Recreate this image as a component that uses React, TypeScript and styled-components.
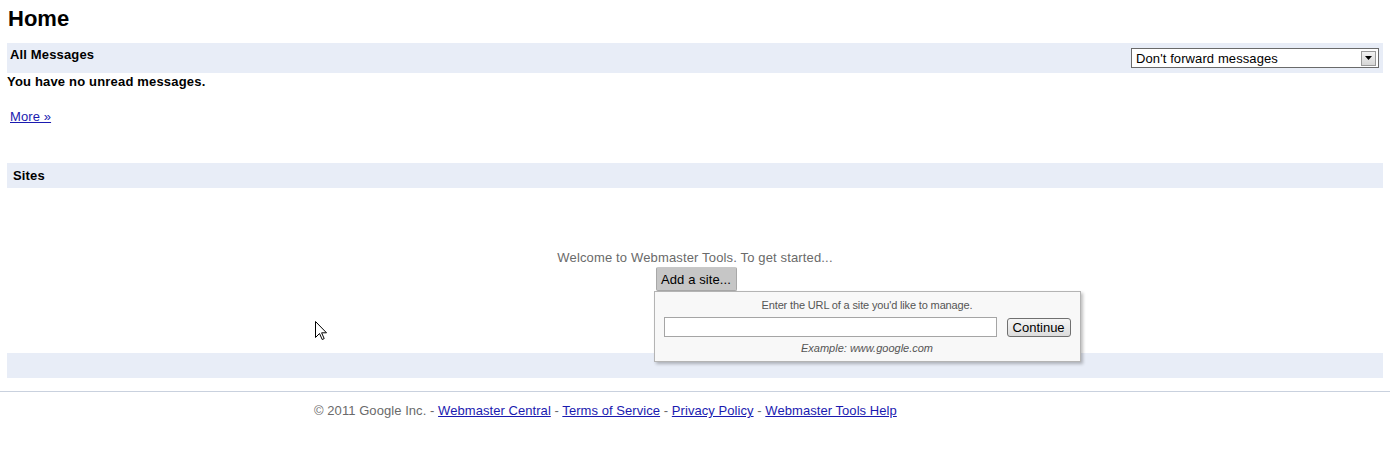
import React from "react";
import styled, { createGlobalStyle } from "styled-components";

const Global = createGlobalStyle`
  html, body { margin: 0; padding: 0; background: #fff; }
  body { font-family: "Liberation Sans", Arial, sans-serif; font-size: 13px; color: #000; letter-spacing: 0.1px; }
`;

const Page = styled.div`
  padding: 0 7px;
`;

const Title = styled.h1`
  margin: 6px 0 12px 1px;
  font-size: 22px;
  line-height: 25px;
  font-weight: bold;
  letter-spacing: 0;
`;

const Bar = styled.div<{ $h: number; $pad: string }>`
  display: flex;
  justify-content: space-between;
  align-items: flex-start;
  height: ${(p) => p.$h}px;
  box-sizing: border-box;
  padding: ${(p) => p.$pad};
  background: #e8edf7;
`;

const BarTitle = styled.div`
  font-weight: bold;
  font-size: 13px;
  line-height: 15px;
  letter-spacing: 0.15px;
`;

const Select = styled.div`
  margin-top: 1px;
  width: 248px;
  height: 20px;
  box-sizing: border-box;
  border: 1px solid #6a6a6a;
  background: #fff;
  display: flex;
  align-items: center;
  justify-content: space-between;
  padding-left: 4px;
  font-size: 13px;
`;

const Arrow = styled.div`
  width: 15px;
  height: 15px;
  margin-right: 2px;
  box-sizing: border-box;
  border: 1px solid #9a9a9a;
  background: linear-gradient(#f2f2f2, #d6d6d6);
  display: flex;
  align-items: center;
  justify-content: center;
`;

const Message = styled.div`
  margin-top: 1px;
  font-weight: bold;
  line-height: 15px;
  letter-spacing: 0.18px;
`;

const Link = styled.a`
  color: #1a1ab0;
  text-decoration: underline;
  cursor: pointer;
`;

const MoreLine = styled.div`
  margin: 20px 0 39px 3px;
  line-height: 15px;
`;

const SitesBody = styled.div`
  padding: 62px 0;
  display: flex;
  flex-direction: column;
  align-items: center;
`;

const Welcome = styled.div`
  color: #6a6a6a;
  line-height: 15px;
  margin-bottom: 2px;
  letter-spacing: 0.15px;
`;

const AddWrap = styled.div`
  position: relative;
  margin-left: 2px;
`;

const AddButton = styled.div`
  width: 81px;
  height: 24px;
  box-sizing: border-box;
  border: 1px solid #a8a8a8;
  border-top-color: #c8c8c8;
  border-radius: 2px;
  background: #c6c6c6;
  display: flex;
  align-items: center;
  justify-content: center;
  font-size: 13px;
`;

const Popup = styled.div`
  position: absolute;
  top: 24px;
  left: -2px;
  width: 427px;
  box-sizing: border-box;
  padding: 6px 9px 6px;
  background: #f8f8f8;
  border: 1px solid #b4b4b4;
  box-shadow: 2px 2px 3px rgba(0, 0, 0, 0.25);
  z-index: 2;
  display: flex;
  flex-direction: column;
  align-items: center;
`;

const Hint = styled.div<{ $italic?: boolean }>`
  font-size: 11px;
  line-height: 14px;
  color: #555;
  font-style: ${(p) => (p.$italic ? "italic" : "normal")};
  letter-spacing: ${(p) => (p.$italic ? "0" : "-0.15px")};
`;

const InputRow = styled.div`
  display: flex;
  align-items: flex-start;
  gap: 10px;
  margin: 5px 0 4px;
  width: 100%;
`;

const UrlInput = styled.input`
  width: 334px;
  height: 20px;
  box-sizing: border-box;
  border: 1px solid #a5a5a5;
  background: #fff;
  padding: 0 3px;
  margin: 0;
  font-family: inherit;
  font-size: 13px;
  outline: none;
`;

const ContinueButton = styled.button`
  margin-top: 1px;
  width: 64px;
  height: 19px;
  box-sizing: border-box;
  padding: 0;
  border: 1px solid #707070;
  border-radius: 3px;
  background: linear-gradient(#f6f6f6, #dcdcdc);
  font-family: inherit;
  font-size: 13px;
  color: #000;
  line-height: 15px;
`;

const Rule = styled.div`
  margin-top: 13px;
  height: 1px;
  background: #c9d1de;
`;

const Footer = styled.div`
  padding: 11px 0 0 314px;
  color: #6a6a6a;
  line-height: 16px;
  letter-spacing: 0.06px;
`;

const Cursor = styled.svg`
  position: absolute;
  left: 315px;
  top: 321px;
  z-index: 5;
`;

export default function App() {
  return (
    <>
      <Global />
      <Page>
        <Title>Home</Title>
        <Bar $h={30} $pad="4px 4px 0 3px">
          <BarTitle>All Messages</BarTitle>
          <Select>
            <span>Don't forward messages</span>
            <Arrow>
              <svg width="7" height="4" viewBox="0 0 7 4">
                <polygon points="0,0 7,0 3.5,4" fill="#000" />
              </svg>
            </Arrow>
          </Select>
        </Bar>
        <Message>You have no unread messages.</Message>
        <MoreLine>
          <Link>More »</Link>
        </MoreLine>
        <Bar $h={25} $pad="5px 6px 0 6px">
          <BarTitle>Sites</BarTitle>
        </Bar>
        <SitesBody>
          <Welcome>Welcome to Webmaster Tools. To get started...</Welcome>
          <AddWrap>
            <AddButton>Add a site...</AddButton>
            <Popup>
              <Hint>Enter the URL of a site you'd like to manage.</Hint>
              <InputRow>
                <UrlInput type="text" />
                <ContinueButton>Continue</ContinueButton>
              </InputRow>
              <Hint $italic>Example: www.google.com</Hint>
            </Popup>
          </AddWrap>
        </SitesBody>
        <Bar $h={25} $pad="0" />
      </Page>
      <Rule />
      <Footer>
        © 2011 Google Inc. - <Link>Webmaster Central</Link> - <Link>Terms of Service</Link> -{" "}
        <Link>Privacy Policy</Link> - <Link>Webmaster Tools Help</Link>
      </Footer>
      <Cursor width="12" height="20" viewBox="0 0 12 20">
        <path
          d="M0.5 0.5 L0.5 16.5 L4.5 12.5 L7.2 18.5 L9.2 17.6 L6.6 11.8 L11.5 11.8 Z"
          fill="#fff"
          stroke="#000"
          strokeWidth="1"
        />
      </Cursor>
    </>
  );
}
